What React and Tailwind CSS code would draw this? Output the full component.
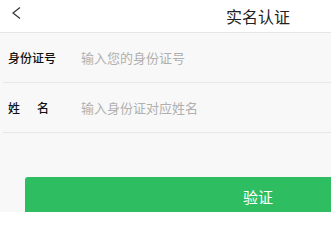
import React from "react";

export default function App() {
  const font = { fontFamily: '"Noto Sans CJK SC", "Noto Sans", sans-serif' };
  return (
    <div className="w-[331px] h-[212px] overflow-hidden bg-[#f8f8f8]" style={font}>
      <div className="w-[516px]">
        <div className="relative h-[33px] bg-white border-b border-[#e6e6e6] flex items-center justify-center">
          <svg className="absolute left-[12px] top-[7px]" width="9" height="12" viewBox="0 0 9 12">
            <polyline points="8,0.5 1,6 8,11.5" fill="none" stroke="#333" strokeWidth="1.2" />
          </svg>
          <span className="text-[16px] leading-none text-[#222]">实名认证</span>
        </div>
        <div className="flex items-center h-[50px] border-b border-[#e8e8e8] ml-[3px] pl-[5px]">
          <span className="w-[73px] text-[12px] font-medium text-[#111]">身份证号</span>
          <span className="text-[13px] text-[#b0b0b0]">输入您的身份证号</span>
        </div>
        <div className="flex items-center h-[50px] border-b border-[#e8e8e8] ml-[3px] pl-[5px]">
          <span className="w-[73px] flex text-[12px] font-medium text-[#111]">
            <span>姓</span>
            <span className="ml-[17px]">名</span>
          </span>
          <span className="text-[13px] text-[#b0b0b0]">输入身份证对应姓名</span>
        </div>
        <div className="mt-[44px] mx-[25px] h-[40px] rounded-[3px] bg-[#2ebe61] flex items-center justify-center">
          <span className="text-[15px] text-white">验证</span>
        </div>
      </div>
    </div>
  );
}
